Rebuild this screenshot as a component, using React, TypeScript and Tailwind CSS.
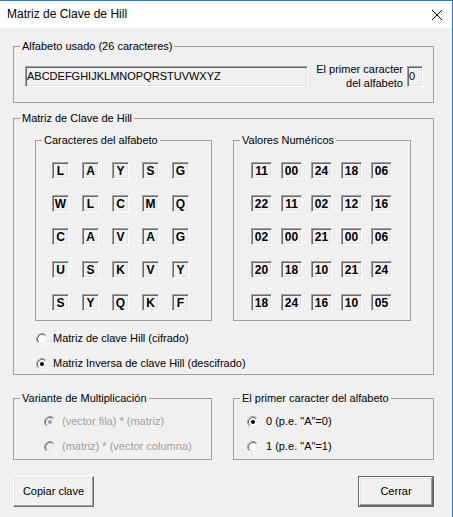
import type { ReactNode } from "react";

const letters = [
  ["L", "A", "Y", "S", "G"],
  ["W", "L", "C", "M", "Q"],
  ["C", "A", "V", "A", "G"],
  ["U", "S", "K", "V", "Y"],
  ["S", "Y", "Q", "K", "F"],
];

const values = [
  ["11", "00", "24", "18", "06"],
  ["22", "11", "02", "12", "16"],
  ["02", "00", "21", "00", "06"],
  ["20", "18", "10", "21", "24"],
  ["18", "24", "16", "10", "05"],
];

const sunken =
  "border border-t-[#a0a0a0] border-l-[#a0a0a0] border-b-white border-r-white shadow-[inset_1px_1px_0_#696969,inset_-1px_-1px_0_#e3e3e3] bg-[#f0f0f0]";

function Group({
  label,
  className,
  children,
}: {
  label: string;
  className?: string;
  children: ReactNode;
}) {
  return (
    <fieldset className={`border border-[#a0a0a0] ${className ?? ""}`}>
      <legend className="ml-[6px] px-[2px] leading-[13px]">{label}</legend>
      {children}
    </fieldset>
  );
}

function Radio({ checked, disabled }: { checked?: boolean; disabled?: boolean }) {
  return (
    <svg width="12" height="12" viewBox="0 0 12 12" className="shrink-0">
      <circle cx="6" cy="6" r="5" fill={disabled ? "#f0f0f0" : "#ffffff"} />
      <path d="M2.11 9.89A5.5 5.5 0 0 1 9.89 2.11" fill="none" stroke="#a0a0a0" />
      <path d="M9.89 2.11A5.5 5.5 0 0 1 2.11 9.89" fill="none" stroke="#ffffff" />
      <path d="M2.82 9.18A4.5 4.5 0 0 1 9.18 2.82" fill="none" stroke="#696969" />
      <path d="M9.18 2.82A4.5 4.5 0 0 1 2.82 9.18" fill="none" stroke="#e3e3e3" />
      {checked && <circle cx="6" cy="6" r="2" fill={disabled ? "#a0a0a0" : "#000000"} />}
    </svg>
  );
}

function Option({
  label,
  checked,
  disabled,
  gap,
}: {
  label: string;
  checked?: boolean;
  disabled?: boolean;
  gap: string;
}) {
  return (
    <div className={`flex items-center h-[13px] ${gap} ${disabled ? "text-[#a0a0a0]" : ""}`}>
      <Radio checked={checked} disabled={disabled} />
      <span>{label}</span>
    </div>
  );
}

function CellGrid({
  rows,
  cellW,
  gapX,
}: {
  rows: string[][];
  cellW: string;
  gapX: string;
}) {
  return (
    <div className="flex flex-col gap-y-[16px]">
      {rows.map((row, i) => (
        <div key={i} className={`flex ${gapX}`}>
          {row.map((v, j) => (
            <div
              key={j}
              className={`${cellW} h-[17px] ${sunken} flex items-center justify-center text-[12px] font-bold leading-none`}
            >
              {v}
            </div>
          ))}
        </div>
      ))}
    </div>
  );
}

function Button({ label, width, isDefault }: { label: string; width: string; isDefault?: boolean }) {
  const face = (
    <div className="h-full border border-t-white border-l-white border-b-[#696969] border-r-[#696969] shadow-[inset_-1px_-1px_0_#a0a0a0,inset_1px_1px_0_#e3e3e3] flex items-center justify-center">
      {label}
    </div>
  );
  return isDefault ? (
    <div className={`${width} h-[31px] border border-[#646464]`}>{face}</div>
  ) : (
    <div className={`${width} h-[31px]`}>{face}</div>
  );
}

export default function App() {
  return (
    <div className="w-[453px] h-[517px] bg-[#f0f0f0] border-t border-r border-[#1a7fd4] font-['Liberation_Sans',Arial,sans-serif] text-[11px] leading-[13px] text-black overflow-hidden">
      <div className="h-[27px] bg-white flex items-center justify-between pl-[7px] pr-[10px] text-[12px]">
        <span>Matriz de Clave de Hill</span>
        <svg width="10" height="10" viewBox="0 0 10 10">
          <path d="M0 0L10 10M10 0L0 10" stroke="#000" strokeWidth="1" />
        </svg>
      </div>

      <div className="pl-[13px] w-[434px]">
        <Group label="Alfabeto usado (26 caracteres)" className="mt-[12px]">
          <div className="flex items-center mt-[9px] pb-[12px] pl-[11px] pr-[10px]">
            <div className={`w-[283px] h-[21px] ${sunken} flex items-center pl-[1px]`}>
              ABCDEFGHIJKLMNOPQRSTUVWXYZ
            </div>
            <div className="flex-1 text-right leading-[14px] pr-[4px]">
              El primer caracter
              <br />
              del alfabeto
            </div>
            <div className={`w-[16px] h-[21px] ${sunken} pl-[1px] pt-[3px]`}>0</div>
          </div>
        </Group>

        <Group label="Matriz de Clave de Hill" className="mt-[9px]">
          <div className="flex gap-x-[21px] mt-[9px] pl-[21px]">
            <Group label="Caracteres del alfabeto" className="w-[177px]">
              <div className="mt-[15px] pb-[9px] pl-[16px]">
                <CellGrid rows={letters} cellW="w-[17px]" gapX="gap-x-[13px]" />
              </div>
            </Group>
            <Group label="Valores Numéricos" className="w-[178px]">
              <div className="mt-[15px] pb-[9px] pl-[17px]">
                <CellGrid rows={values} cellW="w-[21px]" gapX="gap-x-[9px]" />
              </div>
            </Group>
          </div>
          <div className="flex flex-col gap-y-[12px] mt-[11px] pb-[4px] pl-[22px]">
            <Option label="Matriz de clave Hill (cifrado)" gap="gap-x-[5px]" />
            <Option label="Matriz Inversa de clave Hill (descifrado)" checked gap="gap-x-[5px]" />
          </div>
        </Group>

        <div className="flex gap-x-[21px] mt-[17px]">
          <Group label="Variante de Multiplicación" className="w-[199px]">
            <div className="flex flex-col gap-y-[12px] mt-[10px] pb-[6px] pl-[30px]">
              <Option label="(vector fila) * (matriz)" checked disabled gap="gap-x-[6px]" />
              <Option label="(matriz) * (vector columna)" disabled gap="gap-x-[6px]" />
            </div>
          </Group>
          <Group label="El primer caracter del alfabeto" className="w-[201px]">
            <div className="flex flex-col gap-y-[12px] mt-[10px] pb-[6px] pl-[13px]">
              <Option label={'0 (p.e. "A"=0)'} checked gap="gap-x-[7px]" />
              <Option label={'1 (p.e. "A"=1)'} gap="gap-x-[7px]" />
            </div>
          </Group>
        </div>

        <div className="flex justify-between mt-[16px]">
          <Button label="Copiar clave" width="w-[81px]" />
          <Button label="Cerrar" width="w-[76px]" isDefault />
        </div>
      </div>
    </div>
  );
}
